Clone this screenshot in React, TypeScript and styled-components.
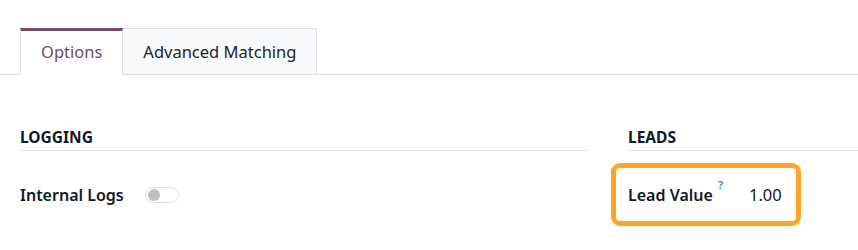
import React from "react";
import styled, { createGlobalStyle } from "styled-components";

const Global = createGlobalStyle`
  html, body { margin: 0; padding: 0; background: #fff; }
  body { font-family: "Noto Sans", "Open Sans", sans-serif; color: #212529; }
`;

const Page = styled.div`
  width: 858px;
  height: 250px;
  overflow: hidden;
  padding-top: 28px;
  box-sizing: border-box;
`;

const TabBar = styled.div`
  display: flex;
  padding-left: 20px;
  border-bottom: 1px solid #dee2e6;
  height: 46px;
`;

const Tab = styled.div<{ $active?: boolean }>`
  display: flex;
  align-items: center;
  padding: 0 20px;
  font-size: 16.5px;
  box-sizing: border-box;
  margin-bottom: -1px;
  border: 1px solid #dee2e6;
  border-top: ${(p) => (p.$active ? "3px solid #714b67" : "1px solid #dee2e6")};
  border-bottom: ${(p) => (p.$active ? "1px solid #fff" : "1px solid #dee2e6")};
  border-left-width: ${(p) => (p.$active ? "1px" : "0")};
  background: ${(p) => (p.$active ? "#fff" : "#f8f9fa")};
  color: ${(p) => (p.$active ? "#714b67" : "#212529")};
  padding-bottom: ${(p) => (p.$active ? "2px" : "0")};
`;

const Columns = styled.div`
  display: grid;
  grid-template-columns: 568px 1fr;
  column-gap: 40px;
  padding: 0 0 0 20px;
  margin-top: 52px;
`;

const Section = styled.div``;

const Heading = styled.div`
  font-size: 15.5px;
  font-weight: 700;
  color: #111827;
  padding-bottom: 3px;
  border-bottom: 1px solid #dee2e6;
  line-height: 20px;
`;

const Row = styled.div<{ $highlight?: boolean }>`
  display: flex;
  align-items: center;
  height: 51px;
  margin-top: 18px;
  ${(p) =>
    p.$highlight
      ? `
    width: 178px;
    box-sizing: border-box;
    margin-left: -11px;
    padding-left: 11px;
    outline: 5px solid #ffa424;
    outline-offset: 1px;
    border-radius: 3px;
  `
      : ""}
`;

const Label = styled.div`
  font-size: 16px;
  font-weight: 600;
  color: #111827;
  display: flex;
  align-items: flex-start;
`;

const Help = styled.sup`
  color: #1f8fb2;
  font-size: 11px;
  font-weight: 600;
  margin-left: 5px;
  position: relative;
  top: -7px;
`;

const Toggle = styled.div`
  width: 34px;
  height: 16px;
  border: 1px solid #dee2e6;
  border-radius: 9px;
  box-sizing: border-box;
  margin-left: 21px;
  display: flex;
  align-items: center;
  padding-left: 2px;
`;

const Knob = styled.div`
  width: 12px;
  height: 12px;
  border-radius: 50%;
  background: #c0c0c0;
`;

const Value = styled.div`
  font-size: 16.5px;
  margin-left: 26px;
  color: #111827;
`;

export default function App() {
  return (
    <Page>
      <Global />
      <TabBar>
        <Tab $active>Options</Tab>
        <Tab>Advanced Matching</Tab>
      </TabBar>
      <Columns>
        <Section>
          <Heading>LOGGING</Heading>
          <Row>
            <Label>Internal Logs</Label>
            <Toggle>
              <Knob />
            </Toggle>
          </Row>
        </Section>
        <Section>
          <Heading>LEADS</Heading>
          <Row $highlight>
            <Label>
              Lead Value<Help>?</Help>
            </Label>
            <Value>1.00</Value>
          </Row>
        </Section>
      </Columns>
    </Page>
  );
}
